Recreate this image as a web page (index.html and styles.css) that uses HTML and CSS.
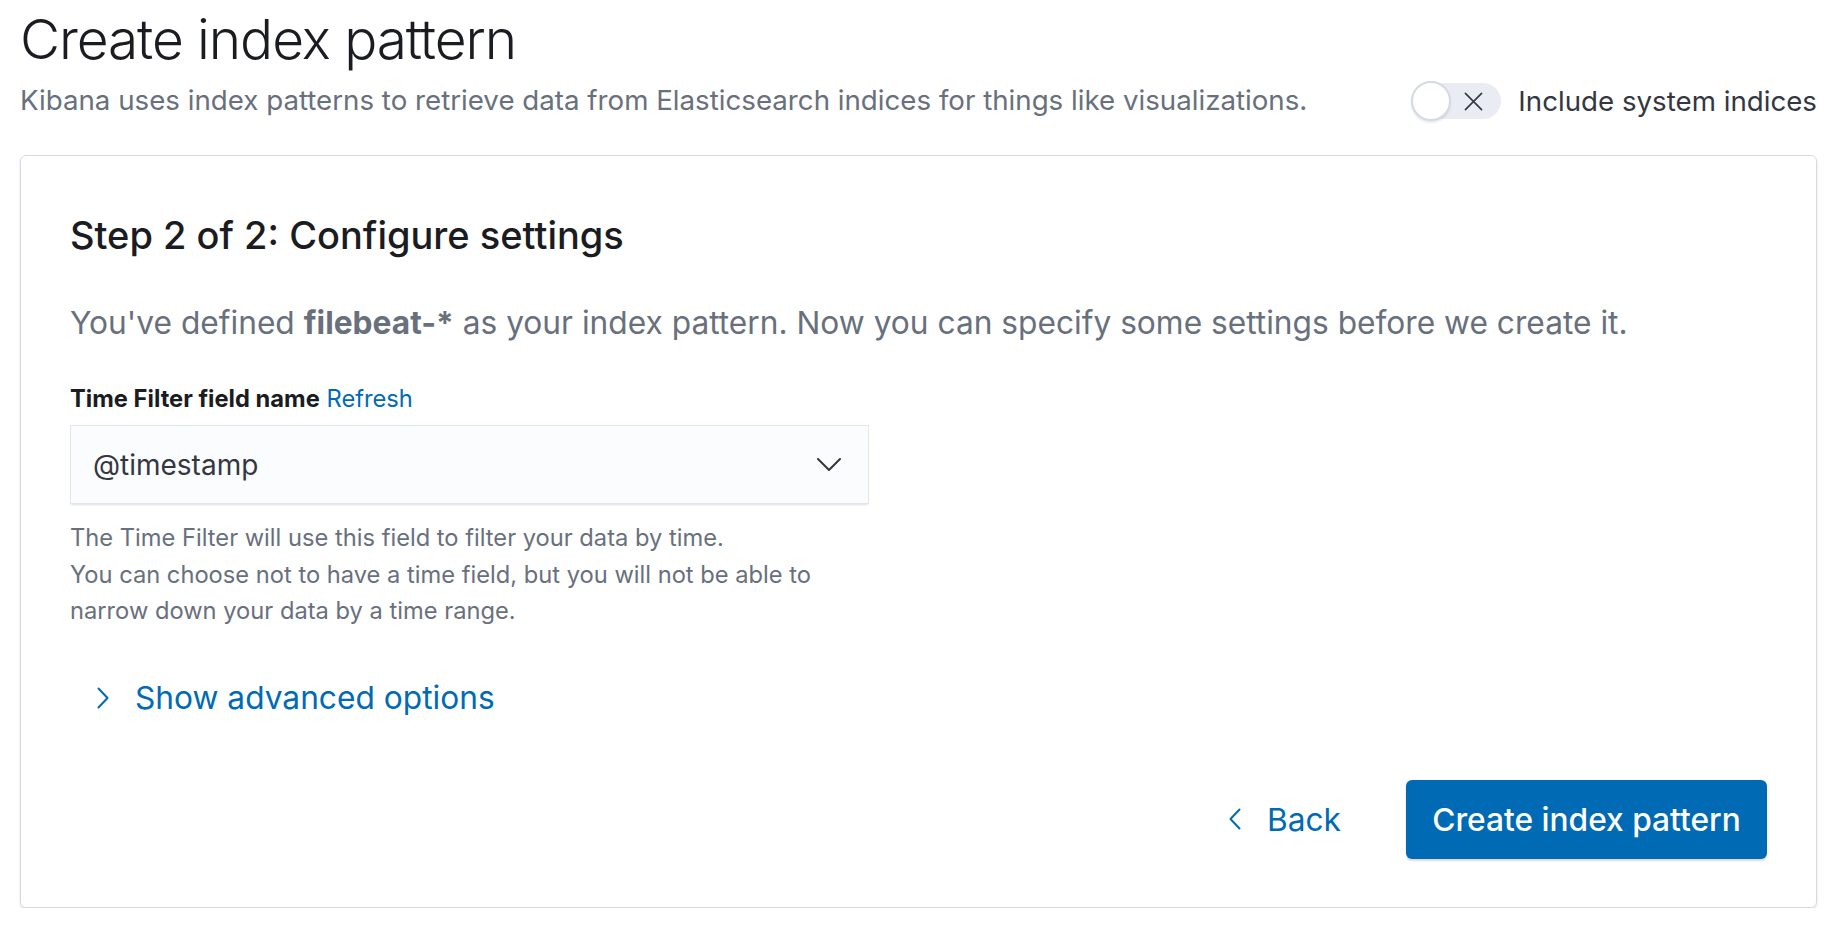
FILE: index.html
```html
<!DOCTYPE html>
<html lang="en">
<head>
<meta charset="utf-8">
<title>Create index pattern</title>
<link rel="stylesheet" href="styles.css">
</head>
<body>
<div class="page">
  <header class="page-header">
    <div class="header-text">
      <h1 class="page-title">Create index pattern</h1>
      <p class="page-subtitle">Kibana uses index patterns to retrieve data from Elasticsearch indices for things like visualizations.</p>
    </div>
    <label class="switch">
      <span class="switch-track">
        <span class="switch-thumb"></span>
        <svg class="switch-icon" viewBox="0 0 20 20" aria-hidden="true"><path d="M1.5 1.5 L18.5 18.5 M18.5 1.5 L1.5 18.5" fill="none" stroke="#343741" stroke-width="1.7" stroke-linecap="round"/></svg>
      </span>
      <span class="switch-label">Include system indices</span>
    </label>
  </header>

  <section class="panel">
    <h2 class="step-title">Step 2 of 2: Configure settings</h2>
    <p class="step-desc">You've defined <strong>filebeat-*</strong> as your index pattern. Now you can specify some settings before we create it.</p>

    <div class="form-row">
      <div class="form-label"><span class="label-text">Time Filter field name</span> <a class="link">Refresh</a></div>
      <div class="select">
        <span class="select-value">@timestamp</span>
        <svg class="select-arrow" viewBox="0 0 24 13" aria-hidden="true"><path d="M1 1 L12 12 L23 1" fill="none" stroke="#343741" stroke-width="2" stroke-linecap="round" stroke-linejoin="round"/></svg>
      </div>
      <div class="help">The Time Filter will use this field to filter your data by time.<br>You can choose not to have a time field, but you will not be able to<br>narrow down your data by a time range.</div>
    </div>

    <button class="advanced" type="button">
      <svg class="chev" viewBox="0 0 12 22" aria-hidden="true"><path d="M1.5 1.5 L10.5 11 L1.5 20.5" fill="none" stroke="#006bb4" stroke-width="2" stroke-linecap="round" stroke-linejoin="round"/></svg>
      <span>Show advanced options</span>
    </button>

    <div class="actions">
      <button class="btn-empty" type="button">
        <svg class="chev" viewBox="0 0 12 22" aria-hidden="true"><path d="M10.5 1.5 L1.5 11 L10.5 20.5" fill="none" stroke="#006bb4" stroke-width="2" stroke-linecap="round" stroke-linejoin="round"/></svg>
        <span>Back</span>
      </button>
      <button class="btn-primary" type="button">Create index pattern</button>
    </div>
  </section>
</div>
</body>
</html>
```

FILE: styles.css
```css
* { box-sizing: border-box; }

html, body {
  margin: 0;
  background: #ffffff;
}

body {
  font-family: Inter, "Noto Sans", "Liberation Sans", sans-serif;
  color: #343741;
}

.page {
  padding: 7px 19px 0 20px;
}

.page-header {
  display: flex;
  justify-content: space-between;
  align-items: flex-end;
}

.page-title {
  margin: 0;
  font-size: 55px;
  line-height: 64px;
  font-weight: 300;
  color: #1a1c21;
  letter-spacing: -0.02em;
}

.page-subtitle {
  margin: 10px 0 0;
  font-size: 27.7px;
  line-height: 38px;
  color: #69707d;
}

.switch {
  display: flex;
  align-items: center;
  gap: 17px;
  margin-bottom: 0;
}

.switch-track {
  position: relative;
  display: block;
  width: 90px;
  height: 36px;
  border-radius: 18px;
  background: #e9edf3;
}

.switch-thumb {
  position: absolute;
  left: 0;
  top: -2px;
  width: 40px;
  height: 40px;
  border-radius: 50%;
  background: #ffffff;
  border: 2px solid #d3dae6;
  box-shadow: 0 2px 2px rgba(0, 0, 0, 0.08);
}

.switch-icon {
  position: absolute;
  left: 53px;
  top: 8.5px;
  width: 19px;
  height: 19px;
}

.switch-label {
  font-size: 27.7px;
  line-height: 36px;
  color: #343741;
}

.panel {
  margin-top: 36px;
  border: 1px solid #d3dae6;
  border-radius: 6px;
  box-shadow: 0 2px 3px rgba(0, 0, 0, 0.09), 0 1px 1px rgba(0, 0, 0, 0.05);
  padding: 58px 49px 48px 49px;
}

.step-title {
  margin: 0;
  font-size: 38px;
  line-height: 42px;
  font-weight: 500;
  color: #1a1c21;
}

.step-desc {
  margin: 47px 0 0;
  font-size: 31.7px;
  line-height: 40px;
  color: #69707d;
}

.step-desc strong {
  font-weight: 700;
}

.form-row {
  margin-top: 42px;
  width: 799px;
}

.form-label {
  font-size: 23.7px;
  line-height: 28px;
}

.label-text {
  font-weight: 700;
  color: #1a1c21;
}

.link {
  color: #006bb4;
  font-weight: 400;
}

.select {
  margin-top: 12px;
  height: 79px;
  display: flex;
  align-items: center;
  justify-content: space-between;
  padding: 0 28px 0 23px;
  background: #fbfcfd;
  box-shadow: inset 0 0 0 1px rgba(15, 39, 118, 0.1), 0 2px 2px -1px rgba(152, 162, 179, 0.35);
}

.select-value {
  font-size: 28px;
  color: #343741;
}

.select-arrow {
  width: 24px;
  height: 13px;
}

.help {
  margin-top: 16px;
  font-size: 23.7px;
  line-height: 36.5px;
  color: #69707d;
  white-space: nowrap;
}

.advanced {
  margin-top: 48px;
  display: flex;
  align-items: center;
  gap: 26px;
  height: 40px;
  padding: 0 0 0 27px;
  border: 0;
  background: none;
  font-family: inherit;
  font-size: 31.7px;
  color: #006bb4;
  cursor: pointer;
}

.chev {
  width: 12px;
  height: 22px;
}

.actions {
  margin-top: 62px;
  display: flex;
  justify-content: flex-end;
  align-items: center;
}

.btn-empty {
  display: flex;
  align-items: center;
  gap: 26px;
  margin-right: 65px;
  padding: 0;
  border: 0;
  background: none;
  font-family: inherit;
  font-size: 31.7px;
  color: #006bb4;
  cursor: pointer;
}

.btn-primary {
  width: 361px;
  height: 79px;
  border: 0;
  border-radius: 6px;
  background: #006bb4;
  color: #ffffff;
  font-family: inherit;
  font-size: 31.7px;
  font-weight: 500;
  box-shadow: 0 2px 2px rgba(0, 0, 0, 0.15);
  cursor: pointer;
}
```
